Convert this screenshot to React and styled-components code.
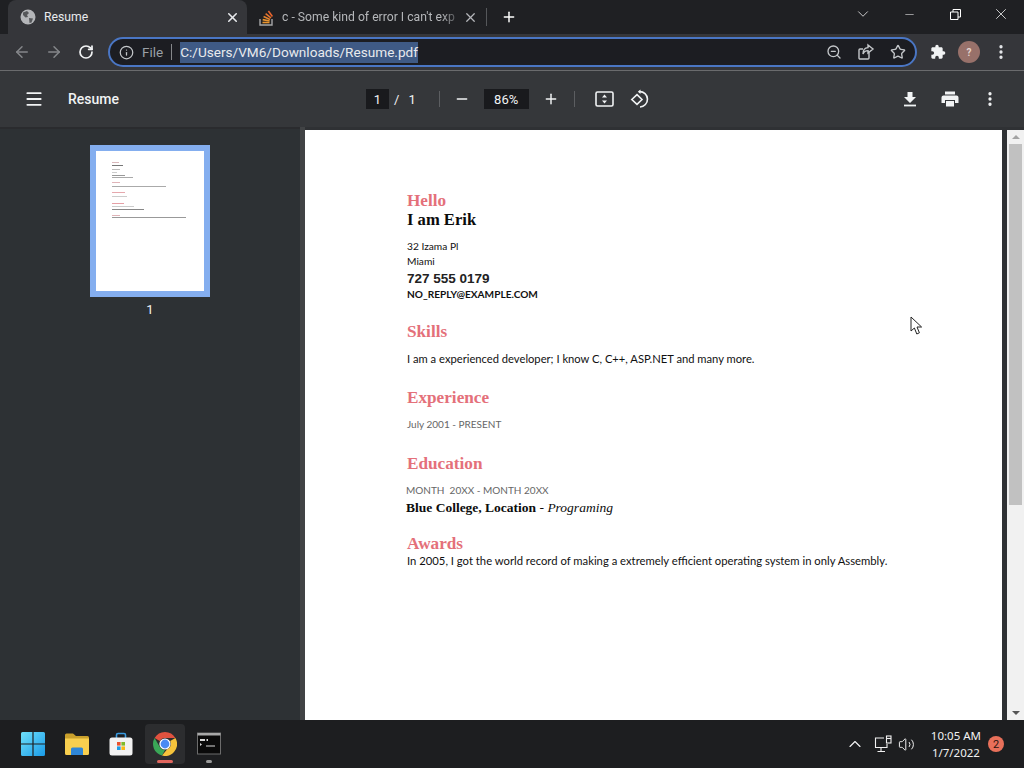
import React from "react"
import styled, { createGlobalStyle } from "styled-components"
import {
  ArrowLeft, ArrowRight, RotateCw, Info, ZoomOut, Star, Plus, Minus, X, ChevronDown, ChevronUp, Menu,
  Volume2, EllipsisVertical,
} from "lucide-react"

const Global = createGlobalStyle`
  html, body { margin: 0; padding: 0; background: #202124; }
  body { font-family: "Roboto", "Liberation Sans", sans-serif; }
`

const Screen = styled.div`
  position: relative;
  width: 1024px;
  height: 768px;
  overflow: hidden;
  display: flex;
  flex-direction: column;
`

const TabStrip = styled.div`
  height: 34px;
  background: #1f2023;
  display: flex;
  align-items: flex-end;
  padding-left: 8px;
  color: #fff;
`

const Tab = styled.div`
  width: ${p => p.$width}px;
  height: 34px;
  box-sizing: border-box;
  display: flex;
  align-items: center;
  padding: 0 7px 0 12px;
  background: ${p => (p.$active ? "#35363a" : "transparent")};
  border-radius: 8px 8px 0 0;
  font-size: 12.2px;
  color: ${p => (p.$active ? "#e8eaed" : "#b5b7ba")};
`

const TabTitle = styled.span`
  flex: 1;
  margin-left: ${p => p.$gap}px;
  white-space: nowrap;
  ${p => p.$fade && "mask-image: linear-gradient(to right, #000 88%, transparent 100%);"}
`

const TabDivider = styled.div`
  width: 1px;
  height: 18px;
  background: #55575a;
  margin: 0 0 8px 1px;
  align-self: flex-end;
`

const NewTab = styled.div`
  display: flex;
  align-items: center;
  height: 34px;
  margin-left: 14px;
`

const WindowButtons = styled.div`
  margin-left: auto;
  display: flex;
  align-items: center;
  height: 28px;
  align-self: flex-start;
`

const WindowButton = styled.div`
  width: 46px;
  display: flex;
  justify-content: center;
  align-items: center;
`

const Toolbar = styled.div`
  height: 36px;
  background: #35363a;
  border-bottom: 1px solid #6a6b6d;
  display: flex;
  align-items: center;
  padding-left: 6px;
  color: #e8eaed;
`

const NavButton = styled.div`
  width: 32px;
  display: flex;
  justify-content: center;
  color: ${p => (p.$dim ? "#85878a" : "#f1f3f4")};
`

const AddressBar = styled.div`
  width: 809px;
  height: 30px;
  box-sizing: border-box;
  margin-left: 6px;
  border: 2px solid #4a76c4;
  border-radius: 15px;
  background: #1c1d22;
  display: flex;
  align-items: center;
  padding: 0 9px;
`

const FileLabel = styled.span`
  font-size: 13.5px;
  color: #9aa0a6;
  margin-left: 8px;
  padding-right: 8px;
  border-right: 1px solid #85878a;
  line-height: 16px;
`

const Url = styled.span`
  margin-left: 8px;
  font-size: 13.6px;
  line-height: 21px;
  color: #e8eaed;
  background: #3f5a85;
`

const AddressIcons = styled.div`
  margin-left: auto;
  display: flex;
  align-items: center;
  gap: 15px;
  color: #c4c7ca;
`

const ToolbarEnd = styled.div`
  display: flex;
  align-items: center;
  margin-left: 13px;
  gap: 12px;
`

const Avatar = styled.div`
  width: 22px;
  height: 22px;
  border-radius: 50%;
  background: #98716a;
  color: #e6d6d0;
  font-size: 10px;
  font-weight: 700;
  display: flex;
  align-items: center;
  justify-content: center;
`

const PdfBar = styled.div`
  height: 56px;
  background: #35373a;
  display: flex;
  align-items: center;
  color: #f1f3f4;
  padding-left: 24px;
`

const PdfTitle = styled.div`
  margin-left: 24px;
  width: 298px;
  font-size: 14px;
  font-weight: 500;
`

const PageBox = styled.div`
  background: #191a1d;
  height: 20px;
  width: ${p => p.$width}px;
  margin-left: ${p => p.$left || 0}px;
  display: flex;
  align-items: center;
  justify-content: center;
  font-size: 13px;
`

const PageText = styled.span`
  font-size: 13px;
  margin-left: ${p => p.$left}px;
`

const BarSep = styled.div`
  width: 1px;
  height: 16px;
  background: #5c5e61;
  margin: 0 ${p => p.$right}px 0 ${p => p.$left}px;
`

const BarIcon = styled.div`
  display: flex;
  justify-content: center;
  width: ${p => p.$width || 24}px;
  margin-left: ${p => p.$left || 0}px;
`

const Body = styled.div`
  flex: 1;
  display: flex;
  min-height: 0;
  background: #2d3134;
`

const Sidebar = styled.div`
  width: 300px;
  background: #2d3134;
  border-top: 2px solid #2a2b2e;
  box-sizing: border-box;
  display: flex;
  flex-direction: column;
  align-items: center;
  padding-top: 16px;
`

const Thumb = styled.div`
  width: 120px;
  height: 152px;
  box-sizing: border-box;
  border: 6px solid #84aeef;
  background: #fff;
  padding: 10px 0 0 16px;
`

const MiniLine = styled.div`
  height: 1px;
  width: ${p => p.$w}px;
  margin-top: ${p => p.$top}px;
  background: ${p => p.$color};
`

const ThumbLabel = styled.div`
  margin-top: 5px;
  font-size: 13px;
  color: #f1f3f4;
`

const Splitter = styled.div`
  width: 5px;
  background: #414345;
`

const Viewer = styled.div`
  flex: 1;
  display: flex;
  flex-direction: column;
  background: #2f3134;
  padding-top: 3px;
  min-width: 0;
`

const ViewerRow = styled.div`
  flex: 1;
  display: flex;
  min-height: 0;
`

const Page = styled.div`
  width: 697px;
  background: #fff;
  box-sizing: border-box;
  padding: 60px 0 0 102px;
  font-family: "Lato", sans-serif;
  color: #111;
`

const Heading = styled.div`
  font-family: "Liberation Serif", serif;
  font-weight: 700;
  font-size: 17.2px;
  line-height: 20px;
  color: #e4707a;
  padding-top: 1px;
  margin-top: ${p => p.$top || 0}px;
  margin-bottom: -1px;
`

const Name = styled.div`
  font-family: "Liberation Serif", serif;
  font-weight: 700;
  font-size: 16.6px;
  line-height: 19px;
  margin: -1px 0 1px;
  color: #0c0c0c;
`

const Line = styled.div`
  font-size: ${p => p.$size}px;
  line-height: 15px;
  margin-top: ${p => p.$top || 0}px;
  margin-left: ${p => p.$left || 0}px;
  color: ${p => (p.$muted ? "#666" : "#111")};
  font-weight: ${p => (p.$bold ? 700 : 400)};
  white-space: pre;
`

const Phone = styled.div`
  font-family: "Liberation Sans", sans-serif;
  font-weight: 700;
  font-size: 13.5px;
  line-height: 18px;
  margin: 1px 0 -1px;
  color: #222;
`

const School = styled.div`
  font-family: "Liberation Serif", serif;
  font-size: 13.5px;
  line-height: 17px;
  margin: 1px 0 0 -1px;
  color: #0c0c0c;
  b { font-weight: 700; }
  i { font-style: italic; }
`

const Scrollbar = styled.div`
  width: 17px;
  margin-left: 5px;
  background: #f1f1f1;
  display: flex;
  flex-direction: column;
  align-items: center;
`

const ScrollArrow = styled.div`
  height: 14px;
  display: flex;
  align-items: center;
  &::after {
    content: "";
    border-left: 4px solid transparent;
    border-right: 4px solid transparent;
    ${p => (p.$down ? "border-top: 4px solid #555;" : "border-bottom: 4px solid #a3a3a3;")}
  }
`

const ScrollThumb = styled.div`
  width: 13px;
  height: 361px;
  background: #c1c1c1;
`

const ScrollRest = styled.div`
  flex: 1;
`

const Taskbar = styled.div`
  height: 48px;
  background: #1d1e20;
  display: flex;
  align-items: center;
  padding-left: 13px;
  color: #fff;
`

const TaskIcon = styled.div`
  position: relative;
  width: 40px;
  height: 40px;
  margin-right: 4px;
  box-sizing: border-box;
  border-radius: 4px;
  display: flex;
  align-items: center;
  justify-content: center;
  background: ${p => (p.$active ? "#2c2d2f" : "transparent")};
`

const TaskMark = styled.div`
  position: absolute;
  bottom: 1px;
  left: 50%;
  transform: translateX(-50%);
  height: 3px;
  border-radius: 2px;
  width: ${p => p.$w}px;
  background: ${p => p.$color};
`

const Tray = styled.div`
  margin-left: auto;
  display: flex;
  align-items: center;
  color: #f1f1f1;
  padding-right: 20px;
`

const TrayIcon = styled.div`
  display: flex;
  margin-right: ${p => p.$right}px;
`

const Clock = styled.div`
  font-family: "Noto Sans", sans-serif;
  font-size: 11.5px;
  line-height: 17px;
  text-align: center;
  margin-right: 7px;
`

const Badge = styled.div`
  width: 16px;
  height: 16px;
  border-radius: 50%;
  background: #e8705a;
  color: #2a1510;
  font-size: 11px;
  display: flex;
  align-items: center;
  justify-content: center;
`

const Cursor = styled.svg`
  position: absolute;
  left: 910px;
  top: 316px;
`

const GlobeIcon = () => (
  <svg width="16" height="16" viewBox="0 0 16 16">
    <circle cx="8" cy="8" r="7.5" fill="#b4b6b9" />
    <path d="M3 3.5 L7 2 L9 4 L7 6 L8 8 L5.5 8.5 L3 6 Z M9 9 L13 9.5 L11.5 13.5 L9.5 14 Z" fill="#55575a" />
  </svg>
)

const StackIcon = () => (
  <svg width="16" height="18" viewBox="0 0 16 18" fill="none">
    <path d="M1 11 V17 H13 V11" stroke="#a5a6a8" strokeWidth="1.4" />
    <path d="M3.5 14.5 H10.5" stroke="#e8942e" strokeWidth="1.6" />
    <path d="M3.7 11.6 L10.6 13" stroke="#e8942e" strokeWidth="1.6" />
    <path d="M4.6 8.6 L11 11.4" stroke="#e8842e" strokeWidth="1.6" />
    <path d="M6.6 5.6 L12 9.8" stroke="#e8742e" strokeWidth="1.6" />
    <path d="M9.4 3 L13.4 8.4" stroke="#e8642e" strokeWidth="1.6" />
  </svg>
)

const ShareIcon = () => (
  <svg width="18" height="18" viewBox="0 0 18 18" fill="none" stroke="currentColor" strokeWidth="1.4">
    <path d="M12 9.5 V15 a1 1 0 0 1 -1 1 H3 a1 1 0 0 1 -1 -1 V7 a1 1 0 0 1 1 -1 H6" />
    <path d="M11 2 L16 6 L11 10 V7.6 C8.4 7.6 6.8 8.8 6 11 C6 7.4 8 4.8 11 4.6 Z" />
  </svg>
)

const PuzzleIcon = () => (
  <svg width="16" height="16" viewBox="0 0 24 24" fill="#f1f3f4">
    <path d="M20.5 11H19V7c0-1.1-.9-2-2-2h-4V3.5a2.5 2.5 0 0 0-5 0V5H4c-1.1 0-2 .9-2 2v3.8h1.5a2.7 2.7 0 0 1 0 5.4H2V20c0 1.1.9 2 2 2h3.8v-1.5a2.7 2.7 0 0 1 5.4 0V22H17c1.1 0 2-.9 2-2v-4h1.5a2.5 2.5 0 0 0 0-5z" />
  </svg>
)

const FitIcon = () => (
  <svg width="20" height="16" viewBox="0 0 20 16" fill="none">
    <rect x="1" y="1" width="17" height="14" rx="1.5" stroke="#f1f3f4" strokeWidth="1.6" />
    <path d="M9.5 3.6 L12 6.4 H7 Z M9.5 12.4 L12 9.6 H7 Z" fill="#f1f3f4" />
  </svg>
)

const RotateIcon = () => (
  <svg width="20" height="20" viewBox="0 0 20 20" fill="none" stroke="#f1f3f4" strokeWidth="1.6">
    <path d="M1.8 10.5 L7 5.6 L12 10.5 L7 15.4 Z" />
    <path d="M9.5 2.6 A7.6 7.6 0 1 1 10 18" />
    <path d="M10.5 0.5 L7.8 2.8 L10.5 5" fill="#f1f3f4" stroke="none" />
  </svg>
)

const DownloadIcon = () => (
  <svg width="14" height="16" viewBox="0 0 14 16" fill="#f1f3f4">
    <path d="M4.5 1 H9.5 V6 H13 L7 12 L1 6 H4.5 Z" />
    <rect x="1" y="13.6" width="12" height="1.8" />
  </svg>
)

const PrintIcon = () => (
  <svg width="18" height="16" viewBox="0 0 18 16" fill="#f1f3f4">
    <path d="M4 0.5 H14 V3.5 H4 Z" />
    <path d="M2.5 4.5 H15.5 A2 2 0 0 1 17.5 6.5 V12 H14 V9 H4 V12 H0.5 V6.5 A2 2 0 0 1 2.5 4.5 Z" />
    <path d="M5 10 H13 V15.5 H5 Z" />
  </svg>
)

const WindowsLogo = () => (
  <svg width="24" height="24" viewBox="0 0 24 24">
    <defs>
      <linearGradient id="win" x1="0" y1="0" x2="1" y2="1">
        <stop offset="0" stopColor="#6fe0fa" />
        <stop offset="1" stopColor="#1a9be8" />
      </linearGradient>
    </defs>
    <path d="M0 1.5 A1.5 1.5 0 0 1 1.5 0 H11.4 V11.4 H0 Z M12.6 0 H22.5 A1.5 1.5 0 0 1 24 1.5 V11.4 H12.6 Z M0 12.6 H11.4 V24 H1.5 A1.5 1.5 0 0 1 0 22.5 Z M12.6 12.6 H24 V22.5 A1.5 1.5 0 0 1 22.5 24 H12.6 Z" fill="url(#win)" />
  </svg>
)

const FolderIcon = () => (
  <svg width="26" height="24" viewBox="0 0 26 24">
    <path d="M1 3 A1.5 1.5 0 0 1 2.5 1.5 H9 L12 4 H23.5 A1.5 1.5 0 0 1 25 5.5 V10 H1 Z" fill="#c9a02c" />
    <path d="M1 6.5 H25 V21.5 A1.5 1.5 0 0 1 23.5 23 H2.5 A1.5 1.5 0 0 1 1 21.5 Z" fill="#f8cf4f" />
    <path d="M7 23 V17 A1.5 1.5 0 0 1 8.5 15.5 H17.5 A1.5 1.5 0 0 1 19 17 V23 Z" fill="#2f86d6" />
  </svg>
)

const StoreIcon = () => (
  <svg width="24" height="24" viewBox="0 0 24 24" fill="none">
    <path d="M7.5 6 V3 A1.5 1.5 0 0 1 9 1.5 H15 A1.5 1.5 0 0 1 16.5 3 V6" stroke="#3a9be0" strokeWidth="1.6" />
    <rect x="0.5" y="5.5" width="23" height="18" rx="2.5" fill="#f2f2f2" />
    <rect x="8" y="10" width="3.6" height="3.6" fill="#e8512d" />
    <rect x="12.4" y="10" width="3.6" height="3.6" fill="#7fba2a" />
    <rect x="8" y="14.4" width="3.6" height="3.6" fill="#1d9be4" />
    <rect x="12.4" y="14.4" width="3.6" height="3.6" fill="#f9b916" />
  </svg>
)

const ChromeIcon = () => (
  <svg width="24" height="24" viewBox="0 0 24 24">
    <path d="M12 0 A12 12 0 0 1 22.4 6 H12 A6 6 0 0 0 6.8 9 L1.6 6 A12 12 0 0 1 12 0 Z" fill="#e0523f" />
    <path d="M1.6 6 L6.8 15 A6 6 0 0 0 12 18 L9 23.6 A12 12 0 0 1 1.6 6 Z" fill="#3aa757" />
    <path d="M22.4 6 A12 12 0 0 1 9 23.6 L14 17.5 A6 6 0 0 0 17.2 9 Z" fill="#f5c33b" />
    <circle cx="12" cy="12" r="5.6" fill="#fff" />
    <circle cx="12" cy="12" r="4.4" fill="#4a8af4" />
  </svg>
)

const TerminalIcon = () => (
  <svg width="24" height="24" viewBox="0 0 24 24">
    <rect x="0.5" y="1" width="23" height="21" fill="#0a0a0a" stroke="#6c6c6c" />
    <rect x="0.5" y="1" width="23" height="2.5" fill="#a8a8a8" />
    <path d="M3 7 H8 V9 H3 Z M9.5 7 H11 V9 H9.5 Z M3 11 L5 12.5 L3 14 Z M9 13.4 H18 V14.4 H9 Z" fill="#d8d8d8" />
  </svg>
)

const NetworkIcon = () => (
  <svg width="18" height="18" viewBox="0 0 18 18" fill="none" stroke="#f1f1f1" strokeWidth="1.1">
    <path d="M10 3 H1.5 V12.5 H13 V9" />
    <path d="M7 12.5 V16 M3.5 16.5 H11" />
    <rect x="12.5" y="1" width="4.5" height="7" />
    <path d="M12.5 3.5 H17" />
  </svg>
)

const MiniLines = [
  [7, 1, "#d9b8bb"], [11, 2, "#777"], [8, 3, "#bbb"], [5, 2, "#ccc"], [13, 2, "#999"], [21, 1, "#aaa"],
  [8, 4, "#e0b4b8"], [54, 3, "#aaa"], [13, 5, "#e6a8ad"], [15, 3, "#ccc"], [12, 6, "#e6a0a6"],
  [22, 2, "#ccc"], [32, 2, "#888"], [8, 5, "#e0b4b8"], [74, 1, "#999"],
]

const App = () => {
  return (
    <Screen>
      <Global />
      <TabStrip>
        <Tab $active $width={239}>
          <GlobeIcon />
          <TabTitle $gap={8}>Resume</TabTitle>
          <X size={15} strokeWidth={2.5} />
        </Tab>
        <Tab $width={238}>
          <StackIcon />
          <TabTitle $gap={7} $fade>c - Some kind of error I can't exp</TabTitle>
          <X size={15} strokeWidth={2} />
        </Tab>
        <TabDivider />
        <NewTab>
          <Plus size={16} strokeWidth={2.2} />
        </NewTab>
        <WindowButtons>
          <WindowButton><ChevronDown size={18} strokeWidth={1} /></WindowButton>
          <WindowButton><Minus size={13} strokeWidth={1} /></WindowButton>
          <WindowButton>
            <svg width="11" height="11" viewBox="0 0 11 11" fill="none" stroke="#fff">
              <path d="M0.5 3 H8 V10.5 H0.5 Z M3 3 V0.5 H10.5 V8 H8" />
            </svg>
          </WindowButton>
          <WindowButton><X size={18} strokeWidth={1} /></WindowButton>
        </WindowButtons>
      </TabStrip>
      <Toolbar>
        <NavButton $dim><ArrowLeft size={18} /></NavButton>
        <NavButton $dim><ArrowRight size={18} /></NavButton>
        <NavButton><RotateCw size={16} strokeWidth={2.6} /></NavButton>
        <AddressBar>
          <Info size={15} color="#c4c7ca" />
          <FileLabel>File</FileLabel>
          <Url>C:/Users/VM6/Downloads/Resume.pdf</Url>
          <AddressIcons>
            <ZoomOut size={16} />
            <ShareIcon />
            <Star size={16} strokeWidth={2} />
          </AddressIcons>
        </AddressBar>
        <ToolbarEnd>
          <PuzzleIcon />
          <Avatar>?</Avatar>
          <EllipsisVertical size={18} strokeWidth={2.4} />
        </ToolbarEnd>
      </Toolbar>
      <PdfBar>
        <Menu size={20} strokeWidth={2.2} />
        <PdfTitle>Resume</PdfTitle>
        <PageBox $width={23}>1</PageBox>
        <PageText $left={5}>/</PageText>
        <PageText $left={9}>1</PageText>
        <BarSep $left={23} $right={14} />
        <Minus size={16} strokeWidth={2.2} />
        <PageBox $width={45} $left={14}>86%</PageBox>
        <BarIcon $left={10}><Plus size={16} strokeWidth={2.2} /></BarIcon>
        <BarSep $left={11} $right={20} />
        <BarIcon $width={20}><FitIcon /></BarIcon>
        <BarIcon $width={20} $left={15}><RotateIcon /></BarIcon>
        <BarIcon $width={20} $left={250}><DownloadIcon /></BarIcon>
        <BarIcon $width={20} $left={20}><PrintIcon /></BarIcon>
        <BarIcon $width={20} $left={20}><EllipsisVertical size={18} strokeWidth={2.4} /></BarIcon>
      </PdfBar>
      <Body>
        <Sidebar>
          <Thumb>
            {MiniLines.map((l, i) => (
              <MiniLine key={i} $w={l[0]} $top={l[1]} $color={l[2]} />
            ))}
          </Thumb>
          <ThumbLabel>1</ThumbLabel>
        </Sidebar>
        <Splitter />
        <Viewer>
          <ViewerRow>
            <Page>
              <Heading>Hello</Heading>
              <Name>I am Erik</Name>
              <Line $size={10.2} $top={10}>32 Izama Pl</Line>
              <Line $size={10.2}>Miami</Line>
              <Phone>727 555 0179</Phone>
              <Line $size={10.1} $bold>NO_REPLY@EXAMPLE.COM</Line>
              <Heading $top={19}>Skills</Heading>
              <Line $size={11.2} $top={10}>I am a experienced developer; I know C, C++, ASP.NET and many more.</Line>
              <Heading $top={21}>Experience</Heading>
              <Line $size={10} $top={10} $muted>July 2001 - PRESENT</Line>
              <Heading $top={21}>Education</Heading>
              <Line $size={10} $top={10} $muted $left={-1}>MONTH  20XX - MONTH 20XX</Line>
              <School><b>Blue College, Location</b> - <i>Programing</i></School>
              <Heading $top={17}>Awards</Heading>
              <Line $size={11.27} $top={-1}>In 2005, I got the world record of making a extremely efficient operating system in only Assembly.</Line>
            </Page>
            <Scrollbar>
              <ScrollArrow />
              <ScrollThumb />
              <ScrollRest />
              <ScrollArrow $down />
            </Scrollbar>
          </ViewerRow>
        </Viewer>
      </Body>
      <Taskbar>
        <TaskIcon><WindowsLogo /></TaskIcon>
        <TaskIcon><FolderIcon /></TaskIcon>
        <TaskIcon><StoreIcon /></TaskIcon>
        <TaskIcon $active>
          <ChromeIcon />
          <TaskMark $w={16} $color="#e2675f" />
        </TaskIcon>
        <TaskIcon>
          <TerminalIcon />
          <TaskMark $w={6} $color="#9b9b9b" />
        </TaskIcon>
        <Tray>
          <TrayIcon $right={9}><ChevronUp size={20} strokeWidth={1.4} /></TrayIcon>
          <TrayIcon $right={6}><NetworkIcon /></TrayIcon>
          <TrayIcon $right={16}><Volume2 size={17} strokeWidth={1.4} /></TrayIcon>
          <Clock>10:05 AM<br />1/7/2022</Clock>
          <Badge>2</Badge>
        </Tray>
      </Taskbar>
      <Cursor width="13" height="20" viewBox="0 0 13 20">
        <path d="M1 1 V15 L4.4 12 L6.8 18 L9.4 16.8 L7 11 H11.6 Z" fill="#fff" stroke="#222" strokeWidth="1" />
      </Cursor>
    </Screen>
  )
}

export default App
